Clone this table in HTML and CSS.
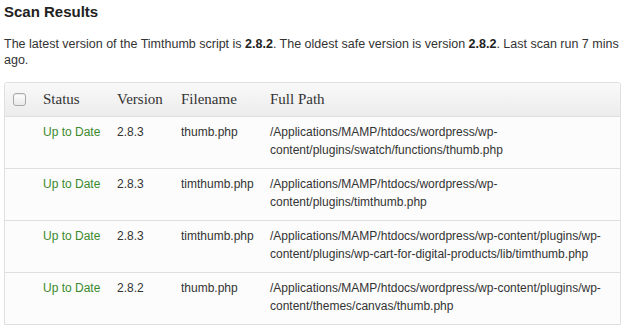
FILE: index.html
```html
<!DOCTYPE html>
<html>
<head>
<meta charset="utf-8">
<link rel="stylesheet" href="styles.css">
</head>
<body>
<h2 class="title">Scan Results</h2>
<p class="summary">The latest version of the Timthumb script is <strong>2.8.2</strong>. The oldest safe version is version <strong>2.8.2</strong>. Last scan run 7 mins ago.</p>
<table class="results">
  <colgroup>
    <col class="c-cb">
    <col class="c-status">
    <col class="c-version">
    <col class="c-file">
    <col class="c-path">
  </colgroup>
  <thead>
    <tr>
      <th class="cb"><span class="checkbox"></span></th>
      <th>Status</th>
      <th>Version</th>
      <th>Filename</th>
      <th>Full Path</th>
    </tr>
  </thead>
  <tbody>
    <tr>
      <td class="cb"></td>
      <td class="ok">Up to Date</td>
      <td>2.8.3</td>
      <td>thumb.php</td>
      <td>/Applications/MAMP/htdocs/wordpress/wp-content/plugins/swatch/functions/thumb.php</td>
    </tr>
    <tr>
      <td class="cb"></td>
      <td class="ok">Up to Date</td>
      <td>2.8.3</td>
      <td>timthumb.php</td>
      <td>/Applications/MAMP/htdocs/wordpress/wp-content/plugins/timthumb.php</td>
    </tr>
    <tr>
      <td class="cb"></td>
      <td class="ok">Up to Date</td>
      <td>2.8.3</td>
      <td>timthumb.php</td>
      <td>/Applications/MAMP/htdocs/wordpress/wp-content/plugins/wp-content/plugins/wp-cart-for-digital-products/lib/timthumb.php</td>
    </tr>
    <tr>
      <td class="cb"></td>
      <td class="ok">Up to Date</td>
      <td>2.8.2</td>
      <td>thumb.php</td>
      <td>/Applications/MAMP/htdocs/wordpress/wp-content/plugins/wp-content/themes/canvas/thumb.php</td>
    </tr>
  </tbody>
</table>
</body>
</html>
```
FILE: styles.css
```css
html, body {
  margin: 0;
  padding: 0;
  background: #ffffff;
}
body {
  padding: 2px 4px 0 4px;
  font-family: "Liberation Sans", Arial, sans-serif;
  color: #333333;
}
.title {
  margin: 0;
  font-size: 15px;
  line-height: 20px;
  font-weight: bold;
  color: #222222;
}
.summary {
  margin: 14px 0 14px 0;
  font-size: 12.5px;
  line-height: 16px;
  color: #333333;
}
.summary strong {
  color: #222222;
}
.results {
  width: 100%;
  table-layout: fixed;
  border-collapse: separate;
  border-spacing: 0;
  border: 1px solid #dfdfdf;
  border-radius: 3px 3px 0 0;
  background: #fcfcfc;
}
.c-cb { width: 30px; }
.c-status { width: 74px; }
.c-version { width: 64px; }
.c-file { width: 89px; }
.results th {
  text-align: left;
  font-family: "Liberation Serif", Georgia, serif;
  font-weight: normal;
  font-size: 15px;
  line-height: 20px;
  color: #333333;
  padding: 6px 8px 7px 8px;
  background: linear-gradient(to bottom, #f9f9f9, #ececec);
  border-bottom: 1px solid #dfdfdf;
  vertical-align: middle;
}
.results th:first-child {
  border-top-left-radius: 3px;
}
.results th:last-child {
  border-top-right-radius: 3px;
}
.results td {
  font-size: 12px;
  line-height: 18px;
  padding: 6px 4px 9px 8px;
  vertical-align: top;
  color: #333333;
  border-top: 1px solid #dfdfdf;
}
.results tbody tr:first-child td {
  border-top: none;
}
.results .ok {
  color: #3b8a2c;
}
.checkbox {
  display: block;
  width: 11px;
  height: 11px;
  border: 1px solid #a9a9a9;
  border-radius: 3px;
  background: linear-gradient(to bottom, #ffffff, #e9e9e9);
  box-shadow: inset 0 1px 1px rgba(0,0,0,0.08);
}
```
